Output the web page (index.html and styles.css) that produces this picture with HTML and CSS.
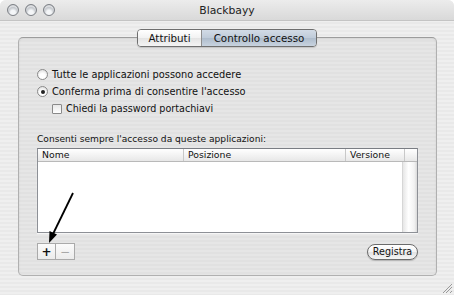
FILE: index.html
```html
<!DOCTYPE html>
<html>
<head>
<meta charset="utf-8">
<link rel="stylesheet" href="styles.css">
</head>
<body>
<div class="window">
  <div class="titlebar">
    <div class="lights">
      <span class="light"></span><span class="light"></span><span class="light"></span>
    </div>
    <div class="title">Blackbayy</div>
    <div class="spacer"></div>
  </div>
  <div class="content">
    <div class="tabs">
      <div class="tab">Attributi</div>
      <div class="tab selected">Controllo accesso</div>
    </div>
    <div class="group">
      <div class="options">
        <div class="option"><span class="radio"></span><span>Tutte le applicazioni possono accedere</span></div>
        <div class="option"><span class="radio on"></span><span>Conferma prima di consentire l'accesso</span></div>
        <div class="option sub"><span class="check"></span><span>Chiedi la password portachiavi</span></div>
      </div>
      <div class="label">Consenti sempre l'accesso da queste applicazioni:</div>
      <div class="table">
        <div class="thead">
          <div class="th c1">Nome</div>
          <div class="th c2">Posizione</div>
          <div class="th c3">Versione</div>
          <div class="th c4"></div>
        </div>
        <div class="tbody">
          <div class="rows"></div>
          <div class="track"></div>
        </div>
      </div>
      <div class="footer">
        <div class="pm">
          <div class="pmb plus">+</div>
          <div class="pmb minus">−</div>
        </div>
        <div class="btn">Registra</div>
      </div>
    </div>
    <div class="grip"></div>
  </div>
  <svg class="arrow" width="454" height="295" viewBox="0 0 454 295">
    <line x1="73" y1="193" x2="53" y2="234" stroke="#000" stroke-width="1.8"/>
    <polygon points="49,243 49.5,231 57,234.5" fill="#000"/>
  </svg>
</div>
</body>
</html>
```
FILE: styles.css
```css
html, body {
  margin: 0;
  padding: 0;
}
body {
  width: 454px;
  height: 295px;
  overflow: hidden;
  font-family: "DejaVu Sans", "Liberation Sans", sans-serif;
  font-size: 9.3px;
  color: #111;
  background: #fff;
}
.window {
  position: relative;
  width: 454px;
  height: 295px;
  display: flex;
  flex-direction: column;
  border-radius: 6px 6px 0 0;
  overflow: hidden;
  background: repeating-linear-gradient(#efefef 0 2px, #e9e9e9 2px 4px);
}
.titlebar {
  height: 21px;
  flex: none;
  display: grid;
  grid-template-columns: 100px 1fr 100px;
  align-items: center;
  background: linear-gradient(#ececec, #d9d9d9);
  border-bottom: 1px solid #c4c4c4;
  box-sizing: border-box;
}
.lights {
  display: flex;
  gap: 6px;
  padding-left: 7px;
}
.light {
  width: 12px;
  height: 12px;
  border-radius: 50%;
  box-sizing: border-box;
  border: 1px solid #7d8086;
  background: radial-gradient(circle at 50% 75%, #f4f6f8 0 25%, #b8bcc2 60%, #8b9097 100%);
  box-shadow: inset 0 2px 1px rgba(255,255,255,0.6);
}
.title {
  text-align: center;
  font-size: 10.8px;
  color: #222;
}
.content {
  flex: 1;
  display: flex;
  flex-direction: column;
  align-items: flex-start;
  padding: 8px 0 0 18px;
  position: relative;
}
.tabs {
  display: flex;
  margin-left: 119px;
  margin-bottom: -10px;
  height: 18px;
  position: relative;
  z-index: 1;
  border: 1px solid #6f6f6f;
  border-radius: 4px;
  box-sizing: border-box;
  overflow: hidden;
  box-shadow: 0 1px 1px rgba(0,0,0,0.15);
}
.tab {
  display: flex;
  align-items: center;
  justify-content: center;
  font-size: 10.3px;
  background: linear-gradient(#ffffff, #f2f2f2 50%, #e4e4e4 51%, #f4f4f4);
  color: #111;
}
.tab:first-child {
  width: 63px;
  border-right: 1px solid #8e8e8e;
}
.tab.selected {
  width: 114px;
  background: linear-gradient(#d2dbe6, #bfcbd9 50%, #aebccc 51%, #c8d3df);
}
.group {
  width: 419px;
  height: 239px;
  box-sizing: border-box;
  border: 1px solid #b0b0b0;
  border-top-color: #9c9c9c;
  border-radius: 5px;
  background: repeating-linear-gradient(#e6e6e6 0 2px, #e1e1e1 2px 4px);
  box-shadow: inset 0 1px 2px rgba(0,0,0,0.08);
  display: flex;
  flex-direction: column;
  padding: 30px 0 0 18px;
}
.options {
  display: flex;
  flex-direction: column;
  gap: 4px;
  font-size: 9.8px;
}
.option {
  display: flex;
  align-items: center;
  gap: 4px;
  height: 13px;
}
.option.sub {
  padding-left: 15px;
  font-size: 9.6px;
}
.radio {
  width: 11px;
  height: 11px;
  box-sizing: border-box;
  border-radius: 50%;
  border: 1px solid #8a8a8a;
  background: radial-gradient(circle at 50% 70%, #ffffff 0 35%, #dcdcdc 90%);
  position: relative;
}
.radio.on::after {
  content: "";
  position: absolute;
  left: 2.5px;
  top: 2.5px;
  width: 4px;
  height: 4px;
  border-radius: 50%;
  background: #222;
}
.check {
  width: 10px;
  height: 10px;
  box-sizing: border-box;
  border: 1px solid #8a8a8a;
  border-radius: 1px;
  background: linear-gradient(#e8e8e8, #ffffff);
}
.label {
  margin-top: 18px;
  height: 12px;
  line-height: 12px;
  font-size: 9.1px;
}
.table {
  margin-top: 3px;
  width: 381px;
  height: 85px;
  box-sizing: border-box;
  border: 1px solid #8d9096;
  border-top-color: #7a7d83;
  background: #fff;
  display: flex;
  flex-direction: column;
  box-shadow: 0 1px 1px rgba(255,255,255,0.7);
}
.thead {
  height: 12px;
  flex: none;
  display: flex;
  background: linear-gradient(#ffffff, #f1f1f1 60%, #e7e7e7);
  border-bottom: 1px solid #b9b9b9;
}
.th {
  line-height: 12px;
  padding-left: 4px;
  box-sizing: border-box;
  border-right: 1px solid #c8c8c8;
}
.th.c1 { width: 146px; }
.th.c2 { width: 162px; }
.th.c3 { width: 58px; border-right: none; }
.th.c4 { flex: 1; border-left: 1px solid #c8c8c8; border-right: none; }
.tbody {
  flex: 1;
  display: flex;
}
.rows {
  flex: 1;
}
.track {
  width: 14px;
  border-left: 1px solid #d6d6d6;
  background: linear-gradient(90deg, #e6e6e6, #ffffff 40%, #f2f2f2 80%, #dadada);
}
.footer {
  margin-top: 10px;
  width: 381px;
  display: flex;
  justify-content: space-between;
  align-items: center;
}
.pm {
  display: flex;
}
.pmb {
  width: 19px;
  height: 17px;
  box-sizing: border-box;
  border: 1px solid #aaaaaa;
  display: flex;
  align-items: center;
  justify-content: center;
  background: linear-gradient(#fbfbfb, #ececec);
  font-size: 12px;
  font-weight: bold;
}
.pmb.plus { color: #111; }
.pmb.minus {
  border-left: none;
  color: #a8a8a8;
  font-weight: normal;
}
.btn {
  width: 51px;
  height: 16px;
  box-sizing: border-box;
  border: 1px solid #6b6b6b;
  border-radius: 8px;
  display: flex;
  align-items: center;
  justify-content: center;
  background: linear-gradient(#ffffff, #f3f3f3 50%, #e2e2e2 51%, #f5f5f5);
  box-shadow: 0 1px 1px rgba(0,0,0,0.2);
  font-size: 9.6px;
}
.grip {
  position: absolute;
  right: 2px;
  bottom: 2px;
  width: 9px;
  height: 9px;
  background: linear-gradient(135deg, transparent 0 45%, #9a9a9a 45% 52%, transparent 52% 65%, #9a9a9a 65% 72%, transparent 72% 85%, #9a9a9a 85% 92%, transparent 92%);
}
.arrow {
  position: absolute;
  left: 0;
  top: 0;
  pointer-events: none;
}
```
